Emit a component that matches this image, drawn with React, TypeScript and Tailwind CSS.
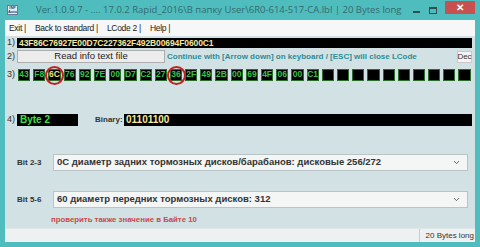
import { ChevronDown } from "lucide-react";

const bytes = ["43","F8","6C","76","92","7E","00","D7","C2","27","36","2F","49","2B","00","69","4F","06","00","C1"];
const slots = Array.from({ length: 30 }, (_, i) => bytes[i] ?? "");

function Select({ text }: { text: string }) {
  return (
    <div className="flex-1 h-[17px] bg-[#f4f6f6] border border-[#b9c4c6] flex items-center pl-[3px] pr-[6px] text-[9.5px] font-bold text-[#333]">
      <span className="flex-1 whitespace-nowrap">{text}</span>
      <ChevronDown className="w-[9px] h-[9px] text-[#555]" strokeWidth={2.5} />
    </div>
  );
}

export default function App() {
  return (
    <div className="w-[480px] h-[247px] bg-[#4fbdbd] flex flex-col overflow-hidden font-['Liberation_Sans',Arial,sans-serif]">
      {/* title bar */}
      <div className="h-[20px] flex items-center pl-[7px] shrink-0">
        <div className="w-[11px] h-[10px] bg-[#e8eef0] border border-[#6a7a90] flex flex-col items-center justify-center text-[4px] leading-[4px] text-[#204080] font-bold">
          <span>INF</span>
          <span>Auto</span>
        </div>
        <span className="ml-[18px] text-[9.5px] text-[#336a6e] whitespace-nowrap font-['Open_Sans',sans-serif]">
          Ver.1.0.9.7 - .... 17.0.2 Rapid_2016\В папку User\6R0-614-517-CA.lbl | 20 Bytes long
        </span>
        <div className="ml-auto flex items-center h-full">
          <span className="w-[7px] h-[2px] bg-[#2d5050] mt-[3px] mr-[9px]" />
          <span className="w-[8px] h-[7px] border border-[#2d5050] border-t-2 mr-[8px]" />
          <div className="w-[30px] h-[13px] bg-[#c75050] mr-[5px] self-start mt-[1px] flex items-center justify-center text-white text-[10px] font-bold">✕</div>
        </div>
      </div>

      <div className="flex-1 flex flex-col mx-[5px] mb-[5px] bg-[#d2e2e4]">
        {/* menu */}
        <div className="h-[16px] bg-[#f7f7f7] flex items-center gap-[9px] pl-[4px] text-[8.5px] tracking-[-0.3px] text-[#222] shrink-0">
          <span>Exit |</span>
          <span>Back to standard |</span>
          <span>LCode 2 |</span>
          <span>Help |</span>
        </div>

        <div className="flex-1 flex flex-col pt-[1px] text-[9px]">
          {/* row 1 */}
          <div className="flex items-center h-[10px] mt-[1px]">
            <span className="w-[12px] pl-[2px] text-[#333]">1)</span>
            <div className="flex-1 mr-[3px] h-[10px] bg-black text-[#f3e9a0] font-bold text-[8.5px] tracking-[-0.1px] leading-[10px] pl-[2px]">
              43F86C76927E00D7C227362F492B00694F0600C1
            </div>
          </div>

          {/* row 2 */}
          <div className="flex items-center h-[13px] mt-[2px]">
            <span className="w-[12px] pl-[2px] text-[#333]">2)</span>
            <div className="w-[148px] h-[13px] bg-[#ececec] border border-[#adadad] flex items-center justify-center text-[9.5px] text-[#222]">
              Read info text file
            </div>
            <span className="ml-[2px] text-[8px] font-bold text-[#2d8b96] whitespace-nowrap">
              Continue with [Arrow down] on keyboard / [ESC] will close LCode
            </span>
            <div className="ml-auto mr-[3px] w-[15px] h-[12px] bg-[#f4f4f4] border border-[#c8c8c8] text-[8px] text-[#333] flex items-center justify-center">
              Dec
            </div>
          </div>

          {/* row 3 */}
          <div className="flex items-center h-[13px] mt-[5px]">
            <span className="w-[13px] pl-[2px] text-[#333]">3)</span>
            <div className="flex gap-[3px]">
              {slots.map((b, i) => (
                <div
                  key={i}
                  className={`relative w-[12.2px] h-[12px] bg-black border border-[#2b6b2b] flex items-center justify-center text-[8.5px] font-bold ${i === 2 ? "text-[#f0e080]" : "text-[#39c24a]"}`}
                >
                  {b}
                  {(i === 2 || i === 10) && (
                    <span className="absolute -left-[4px] -top-[4px] w-[19px] h-[19px] rounded-full border-2 border-[#c42020]" />
                  )}
                </div>
              ))}
            </div>
          </div>

          {/* row 4 */}
          <div className="flex items-center h-[13px] mt-[32px]">
            <span className="w-[12px] pl-[2px] text-[#333]">4)</span>
            <div className="w-[61px] h-[12px] bg-black text-[#3ee040] font-bold text-[10px] leading-[12px] pl-[3px]">
              Byte 2
            </div>
            <span className="ml-[17px] w-[29px] text-[8px] font-bold text-[#333]">Binary:</span>
            <div className="flex-1 mr-[3px] h-[12px] bg-black text-[#f3e9a0] font-bold text-[10px] leading-[12px] pl-[2px]">
              01101100
            </div>
          </div>

          {/* bit 2-3 */}
          <div className="flex items-center mt-[28px] pl-[12px] pr-[7px]">
            <span className="w-[36px] text-[8px] font-bold text-[#333]">Bit 2-3</span>
            <Select text="0C диаметр задних тормозных дисков/барабанов: дисковые 256/272" />
          </div>

          {/* bit 5-6 */}
          <div className="flex items-center mt-[20px] pl-[12px] pr-[7px]">
            <span className="w-[36px] text-[8px] font-bold text-[#333]">Bit 5-6</span>
            <Select text="60 диаметр передних тормозных дисков: 312" />
          </div>
          <div className="pl-[46px] mt-[6px] text-[7.8px] font-bold text-[#c84848]">
            проверить также значение в Байте 10
          </div>
        </div>

        {/* status bar */}
        <div className="h-[14px] bg-[#eef1f1] border-t border-[#e0e6e6] flex justify-end shrink-0">
          <div className="w-[56px] border-l border-[#c8cccc] text-[8px] text-[#333] flex items-center justify-end pr-[1px] whitespace-nowrap">
            20 Bytes long
          </div>
        </div>
      </div>
    </div>
  );
}
